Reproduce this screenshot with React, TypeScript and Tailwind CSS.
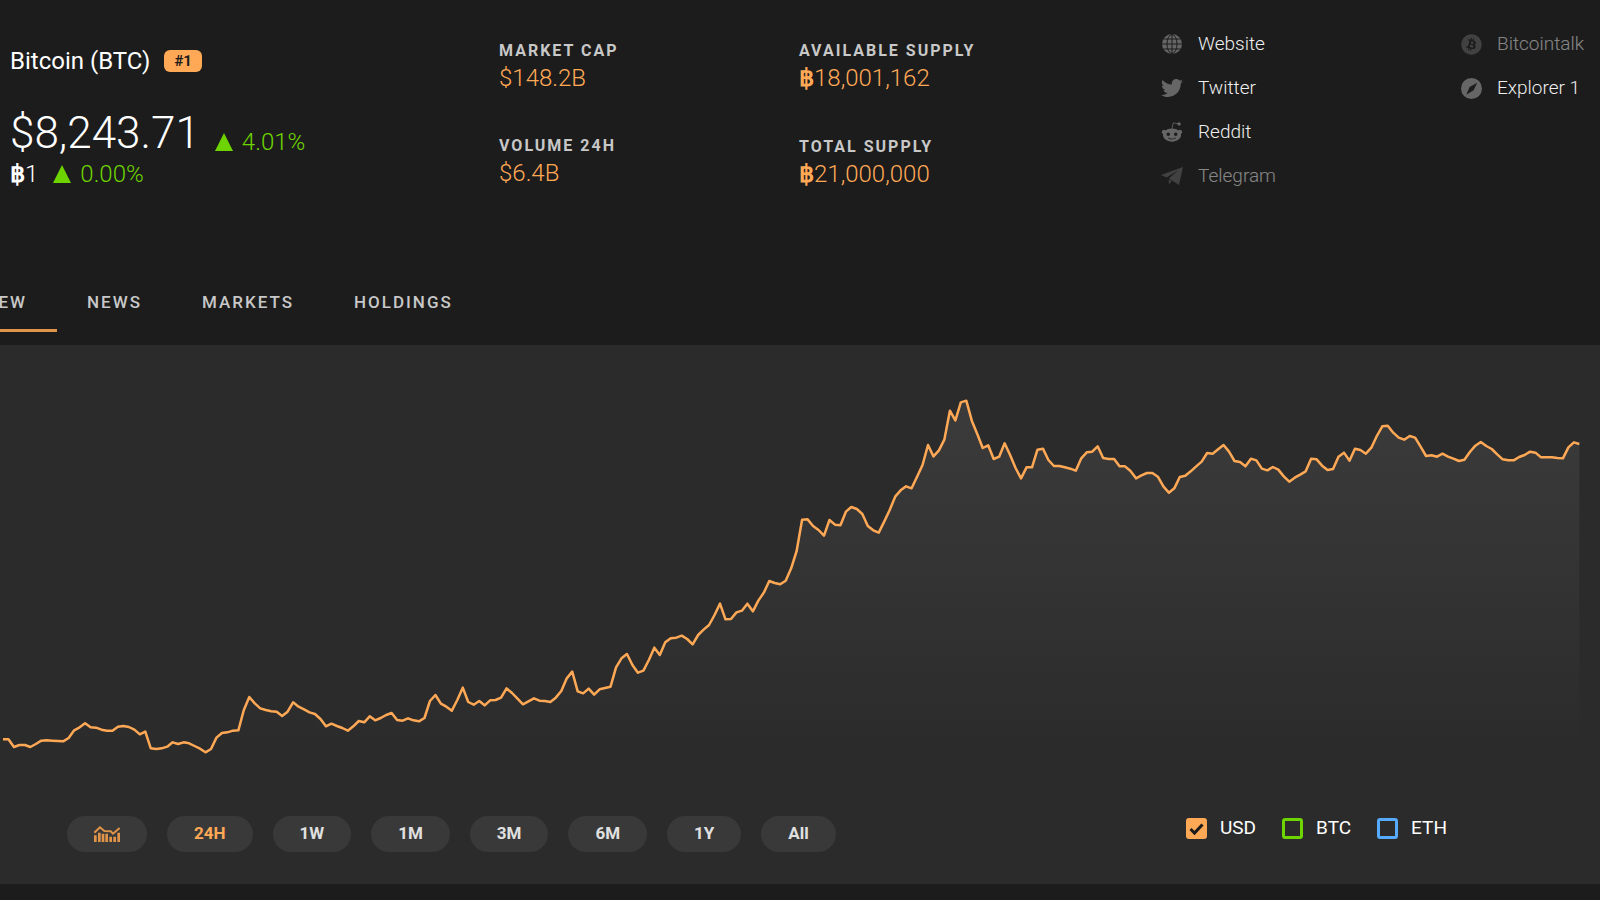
import { useState } from 'react';
import type { ReactNode } from 'react';
import { FaBitcoin, FaRedditAlien, FaTwitter } from 'react-icons/fa';

// 5 minute ticks over 24h, each block is relative to its own base
const history = [
  {
    base: 780,
    ticks: [
      298, 298, 321, 315, 315, 321, 312, 302, 301, 302, 303, 304, 294, 271, 262, 250, 262, 263, 269, 272,
      272, 260, 258, 261, 269, 283, 275, 325, 327, 325, 320, 307, 312, 307, 310, 318, 326, 337, 327, 293,
      279, 277, 272, 271, 210, 171, 190, 205, 210, 214, 215, 228, 215, 187, 200, 208, 217, 222, 237, 259,
      251, 258, 264, 272, 259, 243, 247, 229, 241, 234, 225, 219, 240, 242, 235, 241, 244,
    ],
  },
  {
    base: 540,
    ticks: [
      474, 423, 405, 431, 440, 452, 420, 383, 426, 434, 423, 436, 421, 420, 413, 385, 399, 416, 433, 424,
      415, 422, 423, 426, 413, 393, 355, 335, 394, 400, 386, 404, 388, 384, 380, 322, 295, 282, 315, 338,
      332, 300, 263, 285, 247, 235, 233, 227, 237, 253, 225, 209, 195, 165, 131, 178, 177, 157, 152, 131,
      154, 122, 98, 63, 69, 73, 62,
    ],
  },
  {
    base: 0,
    ticks: [
      565, 513, 419, 418, 438, 450, 467, 420, 434, 436, 395, 381, 387, 402, 438, 451, 458, 425, 390, 350,
      331, 319, 325, 290, 255, 195, 229, 211, 178, 92, 121, 67, 62, 122, 162, 204, 196, 237, 230, 190,
      225, 264, 295, 262, 262, 209, 206, 240, 258, 258, 262, 266, 272, 235, 217, 215, 199, 234, 237, 237,
      259, 259, 273, 295, 286, 279, 279, 290, 319, 338, 325, 291, 287,
    ],
  },
  {
    base: 60,
    ticks: [
      214, 199, 185, 159, 161, 148, 135, 155, 183, 186, 199, 176, 181, 206, 211, 201, 209, 229, 245, 233,
      224, 214, 176, 178, 197, 210, 207, 170, 158, 182, 146, 150, 161, 143, 108, 79, 77, 98, 113, 119,
      108, 113, 140, 168, 166, 170, 161, 170, 176, 183, 179, 156, 137, 126, 138, 147, 163, 178, 181, 181,
      171, 165, 155, 158, 172, 172, 172, 174, 175, 142, 127, 132,
    ],
  },
];

const values = history.flatMap(({ base, ticks }) => ticks.map(t => base + t));
const START = 9;
const END = 4738;
const step = (END - START) / (values.length - 1);
const linePath = values.map((v, i) => `${i ? 'L' : 'M'}${(START + i * step).toFixed(1)} ${v}`).join('');

const ranges = ['24H', '1W', '1M', '3M', '6M', '1Y', 'All'];

const currencies = [
  { name: 'USD', style: 'border-[#ffa956] checked:bg-[#ffa956]' },
  { name: 'BTC', style: 'border-[#6dd400] checked:bg-[#6dd400]' },
  { name: 'ETH', style: 'border-[#56aaff] checked:bg-[#56aaff]' },
];

function GlobeIcon() {
  return (
    <svg viewBox="0 0 20 20" className="size-5" fill="none" stroke="#1c1c1c" aria-hidden="true">
      <circle cx="10" cy="10" r="10" fill="currentColor" stroke="none" />
      <ellipse cx="10" cy="10" rx="5" ry="9.5" />
      <path d="M10 0v20M0 10h20M1.5 5h17M1.5 15h17" />
    </svg>
  );
}

function PlaneIcon() {
  return (
    <svg viewBox="0 0 22 18" className="h-[18px] w-[22px]" fill="currentColor" aria-hidden="true">
      <path d="M22 0L0 8l5.500 2.400L17.500 3.200 7.800 11.600 18 18zM7.800 12.600v5l3-3.600z" />
    </svg>
  );
}

function CompassIcon() {
  return (
    <svg viewBox="0 0 21 21" className="size-[21px]" fill="currentColor" aria-hidden="true">
      <circle cx="10.500" cy="10.500" r="10.500" />
      <path d="M16.200 4.800l-3.600 7.400-7.300 4.500 3.300-7.600z" fill="#1c1c1c" />
    </svg>
  );
}

function ChartIcon() {
  return (
    <svg viewBox="0 0 78 48" className="h-4 w-[26px]" fill="currentColor" aria-hidden="true">
      <path d="M0 28h8v20H0zM12 20h8v28h-8zM23 23h8v25h-8zM34 23h8v25h-8zM46 32h8v16h-8zM58 32h8v16h-8zM70 20h8v28h-8z" />
      <path d="M1 20L18 4l13 11 19 1 7 7L77 6" fill="none" stroke="currentColor" strokeWidth="6" />
    </svg>
  );
}

function Baht() {
  return <span className="font-bold">฿</span>;
}

function Change({ value }: { value: string }) {
  return (
    <span className="flex items-center gap-[9px] text-2xl leading-8 font-light text-[#6dd400]">
      <svg viewBox="0 0 18 18" className="size-[18px]" fill="currentColor" aria-hidden="true">
        <path d="M9 0l9 18H0z" />
      </svg>
      {value}
    </span>
  );
}

function Stat({ label, children }: { label: string; children: ReactNode }) {
  return (
    <div>
      <dt className="text-base leading-5 font-bold tracking-[2px] text-[#c8c8c8]">{label}</dt>
      <dd className="mt-px text-2xl leading-8 font-light text-[#ffa956]">{children}</dd>
    </div>
  );
}

function ExtLink({ icon, label, muted = false }: { icon: ReactNode; label: string; muted?: boolean }) {
  return (
    <li>
      <a href="#" className={`flex h-6 items-center gap-[15px] text-[19px] whitespace-nowrap ${muted ? 'opacity-50' : ''}`}>
        <span className="flex w-[22px] justify-center text-[#666]">{icon}</span>
        <span className="font-light text-[#eee]">{label}</span>
      </a>
    </li>
  );
}

export default function App() {
  const [range, setRange] = useState('24H');

  return (
    <div className="min-h-screen overflow-hidden bg-[#1c1c1c] font-['Roboto',sans-serif] text-white">
      <header className="grid grid-cols-[489fr_300fr_362fr_299fr_140fr] pt-8 pl-[10px]">
        <div className="pt-[13px]">
          <div className="flex items-center gap-[14px]">
            <h1 className="text-2xl leading-8">Bitcoin (BTC)</h1>
            <span className="flex h-[22px] items-center rounded-md bg-[#ffa956] px-[10px] text-[15px] font-bold text-[#1c1c1c]">#1</span>
          </div>
          <div className="mt-[31px] flex items-end gap-[15px]">
            <span className="text-[44px] leading-[50px] font-light">$8,243.71</span>
            <Change value="4.01%" />
          </div>
          <div className="flex items-center gap-[15px]">
            <span className="text-2xl leading-8 font-light"><Baht />1</span>
            <Change value="0.00%" />
          </div>
        </div>

        <dl className="flex flex-col gap-[42px] pt-[9px]">
          <Stat label="MARKET CAP">$148.2B</Stat>
          <Stat label="VOLUME 24H">$6.4B</Stat>
        </dl>
        <dl className="flex flex-col gap-[43px] pt-[9px]">
          <Stat label="AVAILABLE SUPPLY"><Baht />18,001,162</Stat>
          <Stat label="TOTAL SUPPLY"><Baht />21,000,000</Stat>
        </dl>

        <ul className="flex flex-col gap-5">
          <ExtLink icon={<GlobeIcon />} label="Website" />
          <ExtLink icon={<FaTwitter size={22} />} label="Twitter" />
          <ExtLink icon={<FaRedditAlien size={22} />} label="Reddit" />
          <ExtLink icon={<PlaneIcon />} label="Telegram" muted />
        </ul>
        <ul className="flex flex-col gap-5">
          <ExtLink icon={<FaBitcoin size={21} />} label="Bitcointalk" muted />
          <ExtLink icon={<CompassIcon />} label="Explorer 1" />
        </ul>
      </header>

      <nav className="mt-22 -ml-[102px] flex pb-[13px] text-[17px] leading-6 font-medium tracking-[2px] text-[#c8c8c8]">
        <a href="#" className="border-b-3 border-[#e0944a] px-[30px] pt-3 pb-[15px]">OVERVIEW</a>
        <a href="#" className="px-[30px] pt-3 pb-[15px]">NEWS</a>
        <a href="#" className="px-[30px] pt-3 pb-[15px]">MARKETS</a>
        <a href="#" className="px-[30px] pt-3 pb-[15px]">HOLDINGS</a>
      </nav>

      <main className="bg-[#2b2b2b] pb-8">
        <svg viewBox="0 -105 4800 1260" preserveAspectRatio="none" className="h-[420px] w-full" aria-label="Price over the last 24 hours">
          <defs>
            <linearGradient id="area" gradientUnits="userSpaceOnUse" x1="0" y1="60" x2="0" y2="1120">
              <stop offset="0" stopColor="#3b3b3b" />
              <stop offset="1" stopColor="#2b2b2b" />
            </linearGradient>
          </defs>
          <path d={`${linePath}V1120H${START}Z`} fill="url(#area)" />
          <path d={linePath} fill="none" stroke="#ffa956" strokeWidth="2.500" strokeLinejoin="round" vectorEffect="non-scaling-stroke" />
        </svg>

        <div className="mt-[51px] flex items-start justify-between pr-[153px] pl-[67px]">
          <div className="flex gap-5 text-[17px] font-bold text-[#e0e0e0]">
            <button type="button" aria-label="Chart type" className="flex h-9 items-center rounded-full bg-[#393939] px-[27px] text-[#e0944a]">
              <ChartIcon />
            </button>
            {ranges.map(r => (
              <button
                key={r}
                type="button"
                onClick={() => setRange(r)}
                className={`h-9 rounded-full bg-[#393939] px-[27px] ${r === range ? 'text-[#ffa956]' : ''}`}
              >
                {r}
              </button>
            ))}
          </div>

          <div className="flex gap-[26px] text-[19px] leading-6">
            {currencies.map(({ name, style }) => (
              <label key={name} className="flex items-center gap-[13px]">
                <span className="relative flex">
                  <input
                    type="checkbox"
                    defaultChecked={name === 'USD'}
                    className={`peer size-[21px] appearance-none rounded-[3px] border-3 ${style}`}
                  />
                  <svg viewBox="0 0 21 21" className="pointer-events-none absolute inset-0 hidden peer-checked:block" fill="none" stroke="#1c1c1c" strokeWidth="3" aria-hidden="true">
                    <path d="M4.500 11l4 4 8-8.500" />
                  </svg>
                </span>
                {name}
              </label>
            ))}
          </div>
        </div>
      </main>
    </div>
  );
}
